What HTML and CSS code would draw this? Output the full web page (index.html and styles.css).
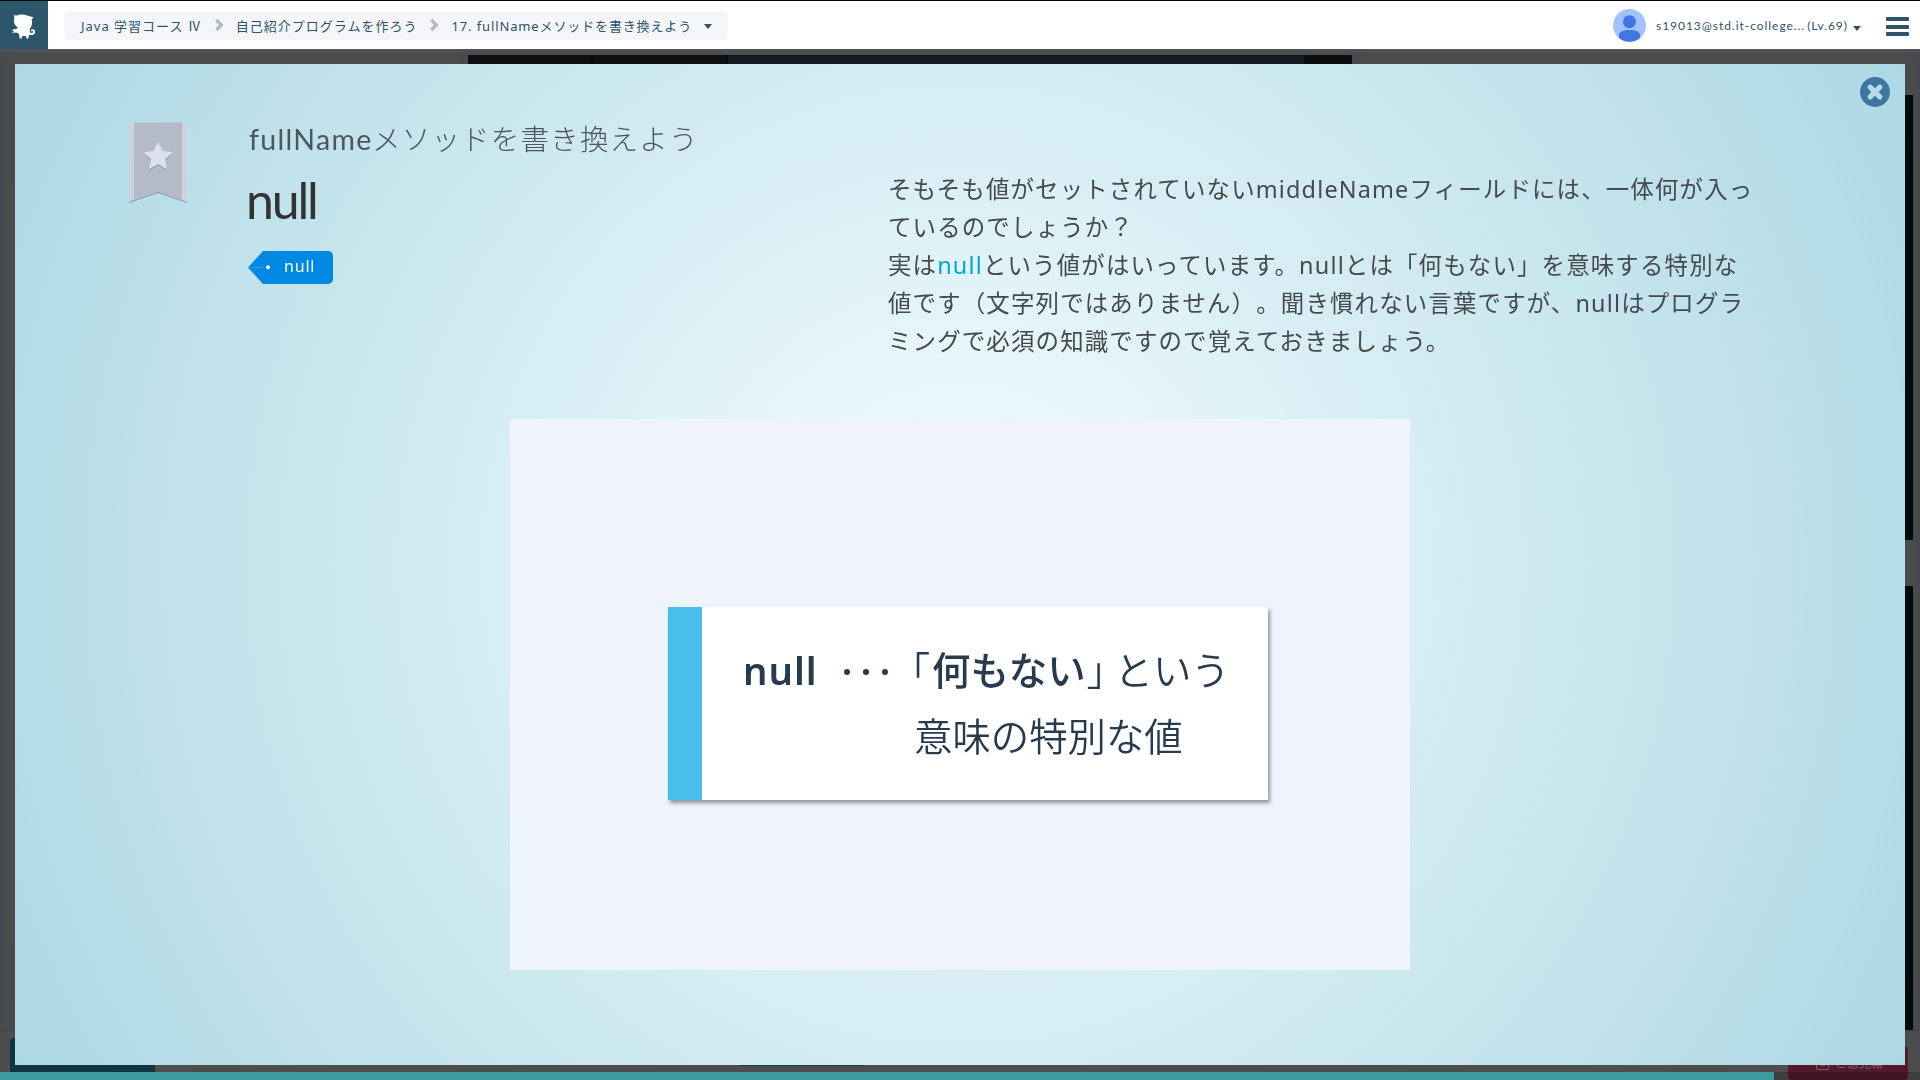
FILE: index.html
```html
<!DOCTYPE html>
<html lang="ja">
<head>
<meta charset="utf-8">
<title>fullNameメソッドを書き換えよう</title>
<link rel="stylesheet" href="styles.css">
</head>
<body>
<div class="app">
  <header class="header">
    <div class="logo">
      <svg width="26" height="28" viewBox="0 0 26 28" fill="#fff"><path d="M4.200 1.500l1.800 1.200C9 1.500 14 1 17 2.500l6.500 1.700-1.800 2.300c.9 3.500.2 6.500-1.500 8.700l-.6 2.300c.2 2.100 1.600 2.900 2.700 2.500 1-.4 1.100-1.800.2-2-.9-.2-1.300.4-1.500.9-.6-1.500.3-2.800 1.900-2.700 2.300.2 2.800 3 1.500 4.600-1.300 1.500-3.300 1.600-5.300.7l-.8 4.100h-1.700l-.7-2.500h-3.600l-.8 2.500H9.800l-.9-4.500-1.200-1.300-6-.2 2.500-1.400-2.600-1.300 5.600-1.500.6-1.100C4.300 12.200 3.300 8.500 4.200 6.500z"/></svg>
    </div>
    <nav class="crumbs">
      <span class="crumb">Java 学習コース Ⅳ</span>
      <svg class="chev" width="8" height="12" viewBox="0 0 8 12"><path d="M1.300 1l5 5-5 5"/></svg>
      <span class="crumb">自己紹介プログラムを作ろう</span>
      <svg class="chev" width="8" height="12" viewBox="0 0 8 12"><path d="M1.300 1l5 5-5 5"/></svg>
      <span class="crumb current">17. fullNameメソッドを書き換えよう</span>
      <i class="caret"></i>
    </nav>
    <div class="user">
      <svg width="33" height="33" viewBox="0 0 33 33"><circle cx="16.500" cy="16.500" r="16.500" fill="#a0c3ff"/><circle cx="16.500" cy="12.700" r="6.500" fill="#4374e0"/><path d="M6 29v-2.500c0-4 4-5.500 10.500-5.500S27 22.500 27 26.500V29a16.500 16.500 0 0 1-21 0z" fill="#4374e0"/></svg>
      <span class="user-name">s19013@std.it-college... (Lv.69)</span>
      <i class="caret"></i>
    </div>
    <div class="menu"><i></i><i></i><i></i></div>
  </header>
  <main class="work">
    <section class="lesson"></section>
    <section class="editor"><div class="tab"></div><div class="tab"></div><div class="code"></div><div class="tools"></div></section>
    <section class="output"><div class="screen"></div><div class="screen"></div></section>
  </main>
  <footer class="footer">
    <div class="btn-left"></div>
    <div class="btn-mid"></div>
    <div class="btn-red"><svg width="13" height="13" viewBox="0 0 13 13" fill="none" stroke="#84606a"><rect x=".5" y=".5" width="12" height="12" rx="1"/><path d="M3.500 4v2a3 3 0 0 0 6 0V4"/></svg>ご意見箱</div>
  </footer>
</div>
<div class="modal">
  <svg class="ribbon" width="60" height="82" viewBox="0 0 60 82">
    <path d="M1 1.500h58v79.500L30 71 1 81z" fill="#8299a6"/>
    <path d="M1 .5h58V80L30 69.800 1 80z" fill="#cdd2dc"/>
    <path d="M6 .5h48v77.700L30 69.800 6 78.200z" fill="#b4bac8"/>
    <path d="M30 20.500l4.300 9.500 10.300 1.200-7.600 7 2 10.300-9-5.200-9 5.200 2-10.300-7.600-7L25.700 30z" fill="#8b92a0"/>
    <path d="M30 19.500l4.300 9.500 10.700 1.200-8 7 2.200 10.300-9.200-5.200-9.200 5.200L23 37.200l-8-7L25.700 29z" fill="#dde1ea"/>
  </svg>
  <div class="heads">
    <h2 class="lesson-title"><span class="latin">fullName</span>メソッドを書き換えよう</h2>
    <h1 class="term">null</h1>
    <div class="tag"><svg width="22" height="33" viewBox="0 0 22 33"><path d="M15 0h7v33h-7L0 16.500z" fill="#0089e3"/><path d="M1 16.500h14" stroke="#329fe8"/><circle cx="20" cy="16.200" r="2" fill="#fff"/></svg><span>null</span></div>
  </div>
  <p class="explain">そもそも値がセットされていないmiddleNameフィールドには、一体何が入っ<br>ているのでしょうか？<br>実は<b>null</b>という値がはいっています。nullとは「何もない」を意味する特別な<br>値です（文字列ではありません）。聞き慣れない言葉ですが、nullはプログラ<br>ミングで必須の知識ですので覚えておきましょう。</p>
  <div class="figure">
    <div class="card">
      <div class="line"><b class="word">null</b><span class="dots"><i></i><i></i><i></i></span><span class="open">「</span><b>何もない</b><span class="close-q">」</span><span>という</span></div>
      <div class="line second">意味の特別な値</div>
    </div>
  </div>
  <div class="arrows">
    <svg width="22" height="24" viewBox="0 0 22 24"><path d="M22 0v24L0 12z"/></svg>
    <svg width="22" height="24" viewBox="0 0 22 24"><path d="M0 0v24l22-12z"/></svg>
  </div>
  <svg class="close" width="30" height="30" viewBox="0 0 30 30"><circle cx="15" cy="15" r="15" fill="#3e76a1"/><path d="M10.200 10.200l9.600 9.600M19.800 10.200l-9.600 9.600" stroke="#b3dce7" stroke-width="5.200" stroke-linecap="round"/></svg>
</div>
<div class="progress"></div>
</body>
</html>
```
FILE: styles.css
```css
* { box-sizing: border-box; }
body {
  margin: 0;
  width: 1920px;
  height: 1080px;
  overflow: hidden;
  font-family: "Noto Sans", "Noto Sans CJK JP", sans-serif;
  background: #474a4e;
}
.app { display: flex; flex-direction: column; height: 1080px; }
.header {
  display: flex;
  align-items: center;
  height: 49px;
  border-top: 1px solid #000;
  background: #fff;
  color: #2c536a;
}
.logo {
  display: flex;
  align-items: center;
  justify-content: center;
  width: 48px;
  height: 48px;
  background: #2c566c;
}
.logo svg { margin: 3px 2px 0 0; }
.crumbs {
  display: flex;
  align-items: center;
  height: 29px;
  width: 664px;
  margin-left: 16px;
  padding-left: 17px;
  border-radius: 5px;
  background: #f5f6fa;
  font-size: 13px;
  letter-spacing: 1px;
  white-space: nowrap;
}
.current { letter-spacing: .87px; }
.chev { margin: 0 13px; fill: none; stroke: #b2b8c6; stroke-width: 3.3; }
.caret {
  border: 4px solid transparent;
  border-top: 5px solid #2c536a;
  border-bottom: 0;
}
.crumbs .caret { margin: 2px 0 0 12px; }
.user {
  display: flex;
  align-items: center;
  margin-left: auto;
  width: 273px;
  font-family: Lato, sans-serif;
  font-size: 12px;
  letter-spacing: .96px;
  word-spacing: -2px;
  white-space: nowrap;
}
.user-name { width: 197px; margin-left: 10px; }
.user .caret { margin-top: 6px; }
.menu {
  display: flex;
  flex-direction: column;
  gap: 3.500px;
  width: 23px;
  margin: 3px 11px 0 0;
}
.menu i { height: 4px; border-radius: 1px; background: #2c536a; }
.work {
  display: flex;
  height: 981px;
  background: linear-gradient(#525457, #474a4e 6px);
  padding-top: 6px;
}
.lesson { width: 454px; margin-left: 7px; border-radius: 6px; background: #4b4b4b; }
.editor { display: flex; width: 884px; margin-left: 7px; background: #0f0f0f; }
.tab { width: 125px; border-right: 2px solid #090909; }
.tab + .tab { width: 135px; }
.code { flex: 1; background: #141820; }
.tools { width: 48px; background: #0b0c0b; }
.output {
  display: flex;
  flex-direction: column;
  gap: 46px;
  width: 554px;
  margin-left: 7px;
  padding-top: 40px;
  border-radius: 6px;
  background: #4b4b4b;
}
.screen { height: 445px; background: #00090c; }
.footer {
  display: flex;
  align-items: flex-start;
  height: 50px;
  padding: 7px 12px 0 10px;
  border-top: 1px solid #404245;
  background: #4d4d4d;
}
.btn-left { width: 145px; height: 43px; border-radius: 4px 0 0; background: #113540; }
.btn-mid { width: 127px; height: 28px; margin-left: 583px; border-radius: 4px; background: #164330; }
.btn-red {
  display: flex;
  gap: 6px;
  width: 120px;
  height: 34px;
  margin: 8px 0 0 auto;
  padding: 11px 0 0 28px;
  border-radius: 4px;
  background: #51192a;
  color: #84606a;
  font-size: 12px;
  line-height: 13px;
}
.modal {
  position: fixed;
  left: 15px;
  top: 64px;
  width: 1890px;
  height: 1001px;
  padding: 58px 0 0 113px;
  display: grid;
  grid-template-columns: 120px 640px 900px;
  grid-template-rows: 297px 551px 1fr;
  background: radial-gradient(circle at center, #f4fdff, #add8e4);
  color: #454a4e;
}
.ribbon { margin-left: -.5px; }
.heads { display: flex; flex-direction: column; align-items: flex-start; }
.lesson-title {
  margin: -5px 0 0 1px;
  font: 300 28.500px/44px Lato, "Noto Sans CJK JP", sans-serif;
  letter-spacing: 1.200px;
  color: #4d565a;
}
.latin { display: inline-block; width: 123px; font-weight: 400; letter-spacing: 1.300px; }
.term {
  margin: 8px 0 0 -2px;
  font: 400 50px/62px Lato, sans-serif;
  letter-spacing: -2.200px;
  color: #333;
}
.tag {
  display: flex;
  width: 85px;
  height: 33px;
  margin-top: 20px;
  border-radius: 0 5px 5px 0;
  background: linear-gradient(90deg, transparent 18px, #0089e3 18px);
  color: #fff;
  font-size: 16px;
  line-height: 30px;
  letter-spacing: .8px;
}
.tag span { margin-left: 14px; }
.explain {
  margin: 48px 0 0;
  font-size: 23.430px;
  line-height: 38px;
  letter-spacing: .05em;
  white-space: nowrap;
  text-spacing-trim: space-all;
}
.explain b { font-weight: 400; color: #00a7d5; }
.figure {
  grid-column: 1 / 4;
  display: flex;
  width: 900px;
  height: 551px;
  margin-left: 382px;
  padding: 188px 0 0 158px;
  background: #eff3fc;
}
.card {
  width: 600px;
  height: 193px;
  padding: 32px 0 0 41px;
  border-left: 34px solid #4abfeb;
  background: #fff;
  box-shadow: 2px 3px 4px rgba(0, 0, 0, .4);
  color: #263b50;
  font-size: 38.400px;
  font-weight: 350;
}
.line { display: flex; height: 66px; line-height: 62px; white-space: nowrap; }
.line b { font-weight: 450; }
.line .word { width: 101px; font-weight: 600; letter-spacing: 1px; }
.dots { display: flex; gap: 13px; align-items: center; width: 50px; }
.dots i { width: 6px; height: 6px; border-radius: 50%; background: #263b50; }
.open { width: 21px; margin: 0 0 0 17px; text-spacing-trim: trim-start; }
.close-q { width: 29px; padding-left: 1px; }
.second { padding-left: 171px; }
.arrows {
  grid-column: 1 / 4;
  display: flex;
  gap: 40px;
  margin: 27px 0 0 1644px;
  fill: #5e93b6;
}
.close { position: absolute; right: 15px; top: 13px; }
.progress {
  position: fixed;
  left: 0;
  bottom: 0;
  width: 1920px;
  height: 8px;
  background: linear-gradient(90deg, #3c9b9f 1774px, rgba(0, 0, 0, .2) 1774px);
}
```
